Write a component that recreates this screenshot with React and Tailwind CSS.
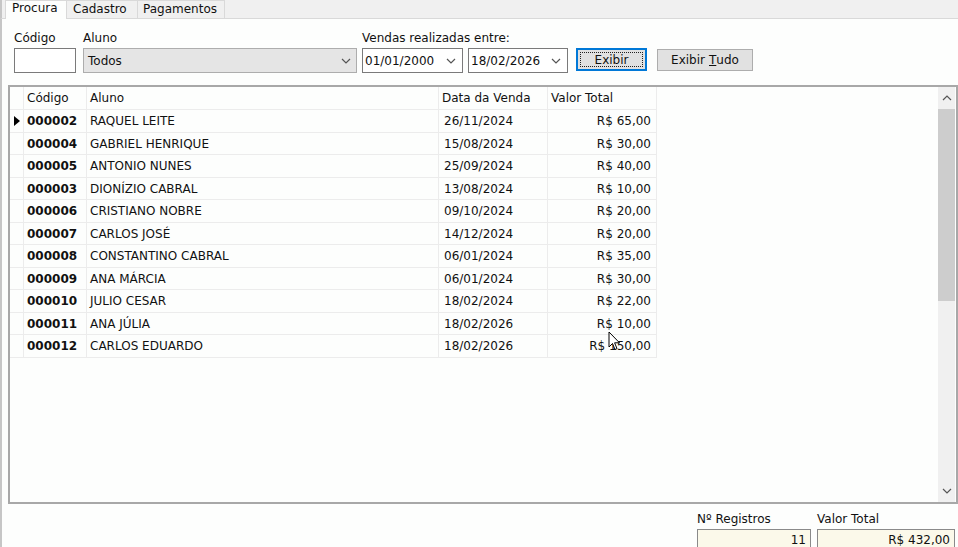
import React from 'react'

const rows = [
  ['000002', 'RAQUEL LEITE', '26/11/2024', 'R$ 65,00'],
  ['000004', 'GABRIEL HENRIQUE', '15/08/2024', 'R$ 30,00'],
  ['000005', 'ANTONIO NUNES', '25/09/2024', 'R$ 40,00'],
  ['000003', 'DIONÍZIO CABRAL', '13/08/2024', 'R$ 10,00'],
  ['000006', 'CRISTIANO NOBRE', '09/10/2024', 'R$ 20,00'],
  ['000007', 'CARLOS JOSÉ', '14/12/2024', 'R$ 20,00'],
  ['000008', 'CONSTANTINO CABRAL', '06/01/2024', 'R$ 35,00'],
  ['000009', 'ANA MÁRCIA', '06/01/2024', 'R$ 30,00'],
  ['000010', 'JULIO CESAR', '18/02/2024', 'R$ 22,00'],
  ['000011', 'ANA JÚLIA', '18/02/2026', 'R$ 10,00'],
  ['000012', 'CARLOS EDUARDO', '18/02/2026', 'R$ 150,00'],
]

const Chevron = ({ up = false, className = '' }) => (
  <svg width="10" height="6" viewBox="0 0 10 6" className={className}>
    <path
      d={up ? 'M1 5 L5 1 L9 5' : 'M1 1 L5 5 L9 1'}
      fill="none"
      stroke="currentColor"
      strokeWidth="1.2"
    />
  </svg>
)

const Label = ({ children }) => (
  <div className="h-[15px] leading-[15px] mb-[2px] whitespace-nowrap">{children}</div>
)

const DateBox = ({ value, w }) => (
  <div className={`${w} h-[25px] bg-white border border-[#7a7a7a] flex items-center pl-[2px] pr-[6px]`}>
    <span className="flex-1">{value}</span>
    <Chevron className="text-[#555]" />
  </div>
)

export default function App() {
  return (
    <div
      className="relative w-[958px] h-[547px] overflow-hidden bg-[#fdfefd] text-[12px] text-[#111]"
      style={{ fontFamily: '"DejaVu Sans", Verdana, sans-serif' }}
    >
      {/* Tabs */}
      <div className="h-[19px] flex items-end bg-[#f0f0f0] border-b border-[#d9d9d9] pl-[3px] border-l-2 border-l-[#c6c6c6]">
        <div className="h-[19px] -mb-px w-[62px] bg-[#fdfefd] border-x border-t border-[#d9d9d9] pl-[6px] leading-[14px]">
          Procura
        </div>
        <div className="h-[18px] w-[71px] bg-[#f0f0f0] border-r border-t border-[#d9d9d9] pl-[6px] leading-[16px]">
          Cadastro
        </div>
        <div className="h-[18px] w-[87px] bg-[#f0f0f0] border-r border-t border-[#d9d9d9] pl-[5px] leading-[16px]">
          Pagamentos
        </div>
      </div>

      <div className="border-l-2 border-[#c6c6c6] h-[528px] flex flex-col">
        {/* Filters */}
        <div className="flex items-end pt-[12px] pl-[12px] shrink-0">
          <div>
            <Label>Código</Label>
            <div className="w-[62px] h-[25px] bg-white border border-[#7a7a7a]" />
          </div>
          <div className="ml-[7px]">
            <Label>Aluno</Label>
            <div className="w-[274px] h-[25px] bg-[#e5e5e5] border border-[#adadad] flex items-center pl-[4px] pr-[5px]">
              <span className="flex-1">Todos</span>
              <Chevron className="text-[#555]" />
            </div>
          </div>
          <div className="ml-[5px]">
            <Label>Vendas realizadas entre:</Label>
            <div className="flex">
              <DateBox value="01/01/2000" w="w-[101px]" />
              <div className="ml-[5px]">
                <DateBox value="18/02/2026" w="w-[100px]" />
              </div>
            </div>
          </div>
          <div className="ml-[8px] mb-[2px] w-[71px] h-[23px] bg-[#e1e1e1] border-2 border-[#0078d7] flex items-center justify-center">
            <div className="w-[63px] h-[15px] border border-dotted border-[#222] flex items-center justify-center leading-none">
              Exibir
            </div>
          </div>
          <div className="ml-[10px] mb-[2px] w-[96px] h-[22px] bg-[#e1e1e1] border border-[#adadad] flex items-center justify-center">
            Exibir <span className="underline ml-[4px]">T</span>udo
          </div>
        </div>

        {/* Grid */}
        <div className="ml-[6px] mt-[12px] w-[950px] h-[419px] shrink-0 border-2 border-[#a8a8a8] bg-[#fdfefd] flex">
          <div className="flex-1">
            <div className="flex h-[22px]">
              <div className="w-[14px] border-r border-[#ececec]" />
              <div className="w-[63px] pl-[3px] leading-[22px] border-r border-[#ececec]">Código</div>
              <div className="w-[352px] pl-[3px] leading-[22px] border-r border-[#ececec]">Aluno</div>
              <div className="w-[109px] pl-[3px] leading-[22px] border-r border-[#ececec]">Data da Venda</div>
              <div className="w-[109px] pl-[3px] leading-[22px] border-r border-[#ececec]">Valor Total</div>
            </div>
            {rows.map((r, i) => (
              <div key={r[0]} className="flex h-[22.5px] leading-[22px]">
                <div className="w-[14px] border-r border-t border-[#ececec] flex items-center justify-center">
                  {i === 0 && (
                    <svg width="6" height="10" viewBox="0 0 6 10">
                      <path d="M0 0 L6 5 L0 10 Z" fill="#000" />
                    </svg>
                  )}
                </div>
                <div className="w-[63px] pl-[3px] font-bold border-r border-t border-[#ececec]">{r[0]}</div>
                <div className="w-[352px] pl-[3px] border-r border-t border-[#ececec] whitespace-nowrap">{r[1]}</div>
                <div className="w-[109px] pl-[5px] border-r border-t border-[#ececec]">{r[2]}</div>
                <div className="w-[109px] pr-[5px] text-right border-r border-t border-[#ececec]">{r[3]}</div>
              </div>
            ))}
            <div className="flex">
              <div className="w-[647px] border-t border-[#ececec]" />
            </div>
          </div>

          {/* Scrollbar */}
          <div className="w-[17px] mr-[1px] bg-[#f0f0f0] flex flex-col">
            <div className="h-[22px] flex items-center justify-center text-[#555]">
              <Chevron up />
            </div>
            <div className="h-[192px] bg-[#cdcdcd]" />
            <div className="flex-1" />
            <div className="h-[22px] flex items-center justify-center text-[#555]">
              <Chevron />
            </div>
          </div>
        </div>

        {/* Totals */}
        <div className="flex justify-end pr-[3px] mt-[8px] shrink-0">
          <div>
            <Label>Nº Registros</Label>
            <div className="w-[114px] h-[22px] bg-[#fbf9ea] border border-[#8a8a8a] text-right pr-[4px] leading-[20px]">11</div>
          </div>
          <div className="ml-[6px]">
            <Label>Valor Total</Label>
            <div className="w-[138px] h-[22px] bg-[#fbf9ea] border border-[#8a8a8a] text-right pr-[4px] leading-[20px]">R$ 432,00</div>
          </div>
        </div>
      </div>

      {/* Mouse cursor */}
      <svg className="absolute left-[608px] top-[331px]" width="13" height="21" viewBox="0 0 13 21">
        <path
          d="M1 1 L1 16 L4.5 12.5 L7 18.5 L9 17.6 L6.6 11.8 L11.5 11.8 Z"
          fill="#fff"
          stroke="#000"
          strokeWidth="1"
          strokeLinejoin="round"
        />
      </svg>
    </div>
  )
}
